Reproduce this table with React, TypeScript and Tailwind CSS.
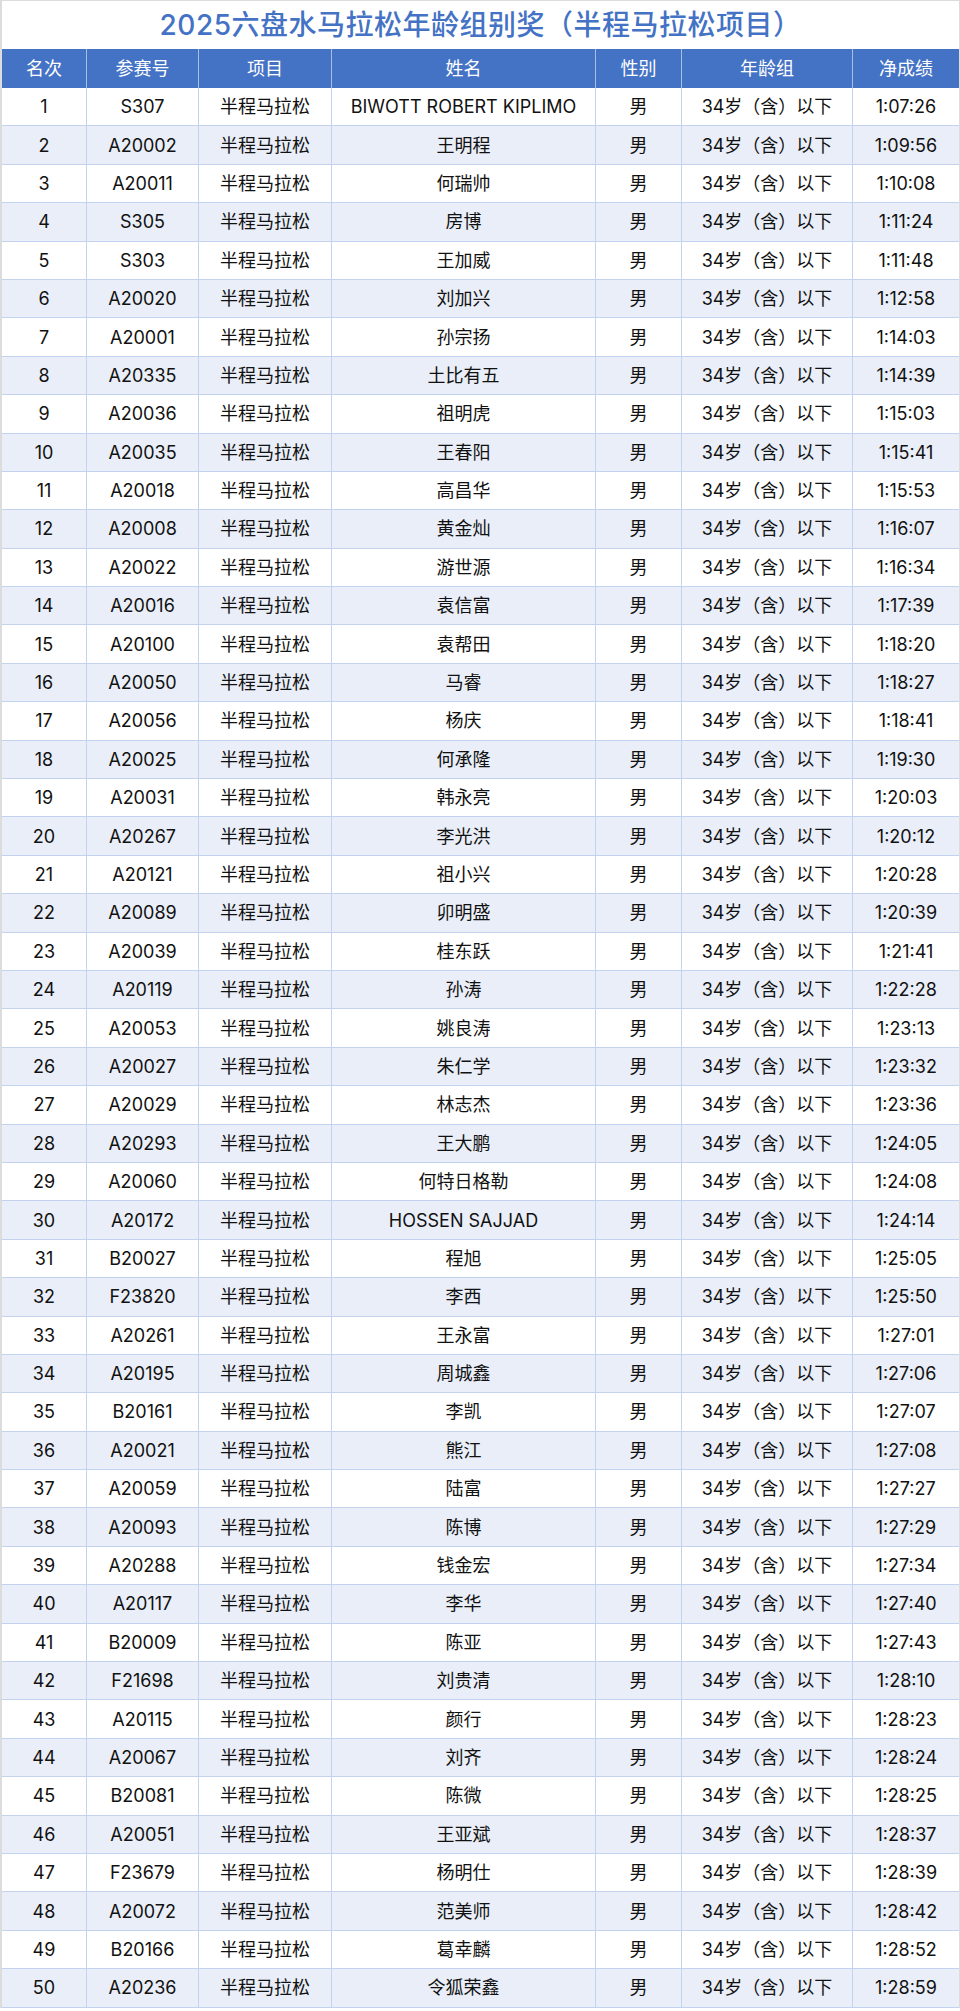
import React from "react";

const rows: [string, string, string][] = [
  ["S307", "BIWOTT ROBERT KIPLIMO", "1:07:26"],
  ["A20002", "王明程", "1:09:56"],
  ["A20011", "何瑞帅", "1:10:08"],
  ["S305", "房博", "1:11:24"],
  ["S303", "王加威", "1:11:48"],
  ["A20020", "刘加兴", "1:12:58"],
  ["A20001", "孙宗扬", "1:14:03"],
  ["A20335", "土比有五", "1:14:39"],
  ["A20036", "祖明虎", "1:15:03"],
  ["A20035", "王春阳", "1:15:41"],
  ["A20018", "高昌华", "1:15:53"],
  ["A20008", "黄金灿", "1:16:07"],
  ["A20022", "游世源", "1:16:34"],
  ["A20016", "袁信富", "1:17:39"],
  ["A20100", "袁帮田", "1:18:20"],
  ["A20050", "马睿", "1:18:27"],
  ["A20056", "杨庆", "1:18:41"],
  ["A20025", "何承隆", "1:19:30"],
  ["A20031", "韩永亮", "1:20:03"],
  ["A20267", "李光洪", "1:20:12"],
  ["A20121", "祖小兴", "1:20:28"],
  ["A20089", "卯明盛", "1:20:39"],
  ["A20039", "桂东跃", "1:21:41"],
  ["A20119", "孙涛", "1:22:28"],
  ["A20053", "姚良涛", "1:23:13"],
  ["A20027", "朱仁学", "1:23:32"],
  ["A20029", "林志杰", "1:23:36"],
  ["A20293", "王大鹏", "1:24:05"],
  ["A20060", "何特日格勒", "1:24:08"],
  ["A20172", "HOSSEN SAJJAD", "1:24:14"],
  ["B20027", "程旭", "1:25:05"],
  ["F23820", "李西", "1:25:50"],
  ["A20261", "王永富", "1:27:01"],
  ["A20195", "周城鑫", "1:27:06"],
  ["B20161", "李凯", "1:27:07"],
  ["A20021", "熊江", "1:27:08"],
  ["A20059", "陆富", "1:27:27"],
  ["A20093", "陈博", "1:27:29"],
  ["A20288", "钱金宏", "1:27:34"],
  ["A20117", "李华", "1:27:40"],
  ["B20009", "陈亚", "1:27:43"],
  ["F21698", "刘贵清", "1:28:10"],
  ["A20115", "颜行", "1:28:23"],
  ["A20067", "刘齐", "1:28:24"],
  ["B20081", "陈微", "1:28:25"],
  ["A20051", "王亚斌", "1:28:37"],
  ["F23679", "杨明仕", "1:28:39"],
  ["A20072", "范美师", "1:28:42"],
  ["B20166", "葛幸麟", "1:28:52"],
  ["A20236", "令狐荣鑫", "1:28:59"],
];

const cols = "grid grid-cols-[85px_112px_133px_264px_86px_171px_106px]";
const headers = ["名次", "参赛号", "项目", "姓名", "性别", "年龄组", "净成绩"];

export default function App() {
  return (
    <div
      className="w-[960px] bg-white text-[#111] border-l-2 border-r border-t border-[#dcdcdc]"
      style={{ fontFamily: '"Inter", "Noto Sans CJK SC", sans-serif' }}
    >
      <div className="h-[48px] flex items-center justify-center text-[28px] font-medium text-[#4472c4] tracking-[0.5px]">
        2025六盘水马拉松年龄组别奖（半程马拉松项目）
      </div>
      <div className={`${cols} h-[39px] bg-[#4472c4] text-white text-[18px]`}>
        {headers.map((h, i) => (
          <div
            key={h}
            className={`flex items-center justify-center border-r border-[#a9bde3] ${i === 6 ? "border-r-0" : ""}`}
          >
            {h}
          </div>
        ))}
      </div>
      {rows.map((r, idx) => {
        const cells = [String(idx + 1), r[0], "半程马拉松", r[1], "男", "34岁（含）以下", r[2]];
        return (
          <div
            key={idx}
            className={`${cols} h-[38.4px] text-[18px] border-b border-[#c3d2ef] ${idx % 2 === 1 ? "bg-[#e9eef8]" : "bg-white"}`}
          >
            {cells.map((c, i) => (
              <div
                key={i}
                className={`flex items-center justify-center whitespace-nowrap border-r border-[#c3d2ef] ${i === 6 ? "border-r-0" : ""}`}
              >
                {c}
              </div>
            ))}
          </div>
        );
      })}
    </div>
  );
}
